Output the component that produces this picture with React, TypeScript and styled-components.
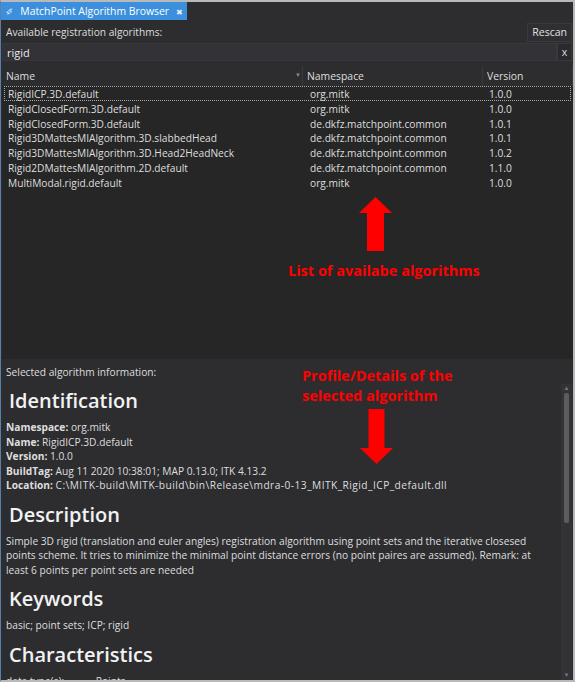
import styled, { createGlobalStyle } from "styled-components"

const GlobalStyle = createGlobalStyle`
  html, body {
    margin: 0;
    padding: 0;
    background: #2d2d30;
  }
  * {
    box-sizing: border-box;
  }
`

interface Algorithm {
  name: string
  namespace: string
  version: string
}

const algorithms: Algorithm[] = [
  { name: "RigidICP.3D.default", namespace: "org.mitk", version: "1.0.0" },
  { name: "RigidClosedForm.3D.default", namespace: "org.mitk", version: "1.0.0" },
  { name: "RigidClosedForm.3D.default", namespace: "de.dkfz.matchpoint.common", version: "1.0.1" },
  { name: "Rigid3DMattesMIAlgorithm.3D.slabbedHead", namespace: "de.dkfz.matchpoint.common", version: "1.0.1" },
  { name: "Rigid3DMattesMIAlgorithm.3D.Head2HeadNeck", namespace: "de.dkfz.matchpoint.common", version: "1.0.2" },
  { name: "Rigid2DMattesMIAlgorithm.2D.default", namespace: "de.dkfz.matchpoint.common", version: "1.1.0" },
  { name: "MultiModal.rigid.default", namespace: "org.mitk", version: "1.0.0" },
]

const Frame = styled.div`
  width: 575px;
  height: 682px;
  display: flex;
  flex-direction: column;
  background: #2d2d30;
  border-top: 2px solid #b9b9b9;
  border-right: 2px solid #b9b9b9;
  border-bottom: 2px solid #b9b9b9;
  border-left: 1px solid #5a7fa8;
  font-family: "Open Sans", "Noto Sans", sans-serif;
  font-size: 10.2px;
  color: #dedede;
  overflow: hidden;
`

const TabBar = styled.div`
  height: 18px;
  display: flex;
  flex-shrink: 0;
`

const Tab = styled.div`
  width: 186px;
  height: 18px;
  display: flex;
  align-items: center;
  gap: 7px;
  padding: 0 4px 0 5px;
  background: #3b8fdc;
  color: #ffffff;
  font-size: 10.4px;
  white-space: nowrap;
`

const TabClose = styled.span`
  margin-left: auto;
  font-size: 8px;
  color: #e8eef6;
`

const LabelRow = styled.div`
  height: 23px;
  display: flex;
  align-items: center;
  justify-content: space-between;
  padding: 1px 1px 0 5px;
  flex-shrink: 0;
`

const RescanButton = styled.button`
  height: 19px;
  padding: 0 4px;
  background: #2f2f33;
  border: 1px solid #3a3a3e;
  color: #e0e0e0;
  font-family: inherit;
  font-size: 10.5px;
`

const SearchRow = styled.div`
  height: 18px;
  display: flex;
  padding: 0 1px;
  margin-bottom: 5px;
  flex-shrink: 0;
`

const SearchInput = styled.div`
  flex: 1;
  background: #333337;
  border: 1px solid #38383c;
  padding: 0 4px;
  display: flex;
  align-items: center;
  font-size: 11px;
  color: #e8e8e8;
`

const ClearButton = styled.div`
  width: 15px;
  background: #2a2a2d;
  border: 1px solid #3a3a3e;
  display: flex;
  align-items: center;
  justify-content: center;
  font-size: 10.5px;
`

const Table = styled.div`
  position: relative;
  height: 293px;
  margin: 0 0 0 1px;
  background: #262626;
  flex-shrink: 0;
`

const HeaderRow = styled.div`
  height: 20px;
  display: grid;
  grid-template-columns: 301px 180px 1fr;
  background: #2d2d30;
`

const HeaderCell = styled.div`
  display: flex;
  align-items: center;
  padding-left: 4px;
  font-size: 10.4px;
  border-right: 1px solid #3a3a3e;
  position: relative;
`

const SortMark = styled.span`
  position: absolute;
  right: 1px;
  top: 5px;
  font-size: 6px;
  color: #8a8a8a;
`

const Row = styled.div<{ $focused?: boolean }>`
  height: 14.8px;
  display: grid;
  grid-template-columns: 301px 180px 1fr;
  align-items: center;
  margin: 0 2px;
  border: 1px ${(props) => (props.$focused ? "dotted #a8a8a8" : "solid transparent")};
`

const Cell = styled.div`
  padding-left: 3px;
  white-space: nowrap;
`

const NamespaceCell = styled(Cell)`
  padding-left: 4px;
`

const Annotation = styled.div<{ $x: number; $y: number }>`
  position: absolute;
  left: ${(props) => props.$x}px;
  top: ${(props) => props.$y}px;
  color: #ff0000;
  font-family: "Open Sans", sans-serif;
  font-weight: 700;
  font-size: 14.5px;
  line-height: 20px;
  white-space: nowrap;
`

const ArrowBox = styled.svg<{ $x: number; $y: number }>`
  position: absolute;
  left: ${(props) => props.$x}px;
  top: ${(props) => props.$y}px;
`

const InfoSection = styled.div`
  position: relative;
  flex: 1;
  display: flex;
  flex-direction: column;
  min-height: 0;
`

const InfoLabel = styled.div`
  height: 25px;
  display: flex;
  align-items: center;
  padding-left: 5px;
  flex-shrink: 0;
`

const InfoPanel = styled.div`
  flex: 1;
  display: flex;
  min-height: 0;
  background: #2d2d30;
`

const InfoContent = styled.div`
  flex: 1;
  padding: 0 8px 0 5px;
  overflow: hidden;
`

const Heading = styled.h1`
  margin: 3px 0 5px 3px;
  font-size: 20px;
  font-weight: 600;
  color: #f2f2f2;
  line-height: 28px;
`

const Para = styled.div`
  line-height: 14.5px;
  margin-bottom: 8px;
`

const Line = styled.div`
  line-height: 14.5px;
  white-space: nowrap;
`

const PathText = styled.span`
  letter-spacing: 0.45px;
`

const Scrollbar = styled.div`
  width: 11px;
  margin: 0 1px 0 0;
  background: #333337;
  display: flex;
  flex-direction: column;
  align-items: center;
  flex-shrink: 0;
`

const ScrollArrow = styled.div`
  height: 9px;
  font-size: 6px;
  color: #777;
  line-height: 9px;
`

const ScrollThumb = styled.div`
  width: 5px;
  height: 130px;
  border-radius: 2px;
  background: #5c5c60;
  margin-bottom: auto;
`

const TabIcon = () => (
  <svg width="15" height="15" viewBox="0 0 14 14">
    <rect x="1" y="7" width="3" height="3" fill="#cfe3f7" />
    <rect x="4" y="4" width="3" height="3" fill="#a9cdf0" />
    <rect x="7" y="2" width="3" height="3" fill="#e6f1fb" />
    <rect x="4" y="9" width="3" height="3" fill="#e6f1fb" />
    <rect x="8" y="6" width="3" height="3" fill="#cfe3f7" />
    <rect x="10" y="1" width="2" height="3" fill="#a9cdf0" />
    <rect x="2" y="11" width="2" height="2" fill="#a9cdf0" />
  </svg>
)

const UpArrow = () => (
  <ArrowBox $x={356} $y={131} width="35" height="55" viewBox="0 0 35 55">
    <polygon points="17.5,0 34,16 26,16 26,54 9,54 9,16 1,16" fill="#ff0000" />
  </ArrowBox>
)

const DownArrow = () => (
  <ArrowBox $x={358} $y={50} width="35" height="56" viewBox="0 0 35 56">
    <polygon points="9.5,0 25.5,0 25.5,39 34,39 17.5,55 1,39 9.5,39" fill="#ff0000" />
  </ArrowBox>
)

const App = () => (
  <>
    <GlobalStyle />
    <Frame>
      <TabBar>
        <Tab>
          <TabIcon />
          MatchPoint Algorithm Browser
          <TabClose>✖</TabClose>
        </Tab>
      </TabBar>

      <LabelRow>
        <span>Available registration algorithms:</span>
        <RescanButton>Rescan</RescanButton>
      </LabelRow>

      <SearchRow>
        <SearchInput>rigid</SearchInput>
        <ClearButton>x</ClearButton>
      </SearchRow>

      <Table>
        <HeaderRow>
          <HeaderCell>
            Name
            <SortMark>▼</SortMark>
          </HeaderCell>
          <HeaderCell>Namespace</HeaderCell>
          <HeaderCell>Version</HeaderCell>
        </HeaderRow>
        {algorithms.map((algorithm, index) => (
          <Row key={index} $focused={index === 0}>
            <Cell>{algorithm.name}</Cell>
            <NamespaceCell>{algorithm.namespace}</NamespaceCell>
            <Cell>{algorithm.version}</Cell>
          </Row>
        ))}

        <UpArrow />
        <Annotation $x={286} $y={195}>
          List of availabe algorithms
        </Annotation>
      </Table>

      <InfoSection>
        <InfoLabel>Selected algorithm information:</InfoLabel>
        <InfoPanel>
          <InfoContent>
            <Heading>Identification</Heading>
            <Para>
              <Line>
                <b>Namespace:</b> org.mitk
              </Line>
              <Line>
                <b>Name:</b> RigidICP.3D.default
              </Line>
              <Line>
                <b>Version:</b> 1.0.0
              </Line>
              <Line>
                <b>BuildTag:</b> Aug 11 2020 10:38:01; MAP 0.13.0; ITK 4.13.2
              </Line>
              <Line>
                <b>Location:</b> <PathText>C:\MITK-build\MITK-build\bin\Release\mdra-0-13_MITK_Rigid_ICP_default.dll</PathText>
              </Line>
            </Para>
            <Heading>Description</Heading>
            <Para>
              Simple 3D rigid (translation and euler angles) registration algorithm using point sets and the iterative
              closesed points scheme. It tries to minimize the minimal point distance errors (no point paires are
              assumed). Remark: at least 6 points per point sets are needed
            </Para>
            <Heading>Keywords</Heading>
            <Para>basic; point sets; ICP; rigid</Para>
            <Heading>Characteristics</Heading>
            <Line>
              data type(s):&nbsp;&nbsp;&nbsp;&nbsp;&nbsp;&nbsp;&nbsp;&nbsp;&nbsp;&nbsp;&nbsp;&nbsp;Points
            </Line>
          </InfoContent>
          <Scrollbar>
            <ScrollArrow>▲</ScrollArrow>
            <ScrollThumb />
            <ScrollArrow>▼</ScrollArrow>
          </Scrollbar>
        </InfoPanel>

        <Annotation $x={301} $y={7}>
          Profile/Details of the
          <br />
          selected algorithm
        </Annotation>
        <DownArrow />
      </InfoSection>
    </Frame>
  </>
)

export default App
